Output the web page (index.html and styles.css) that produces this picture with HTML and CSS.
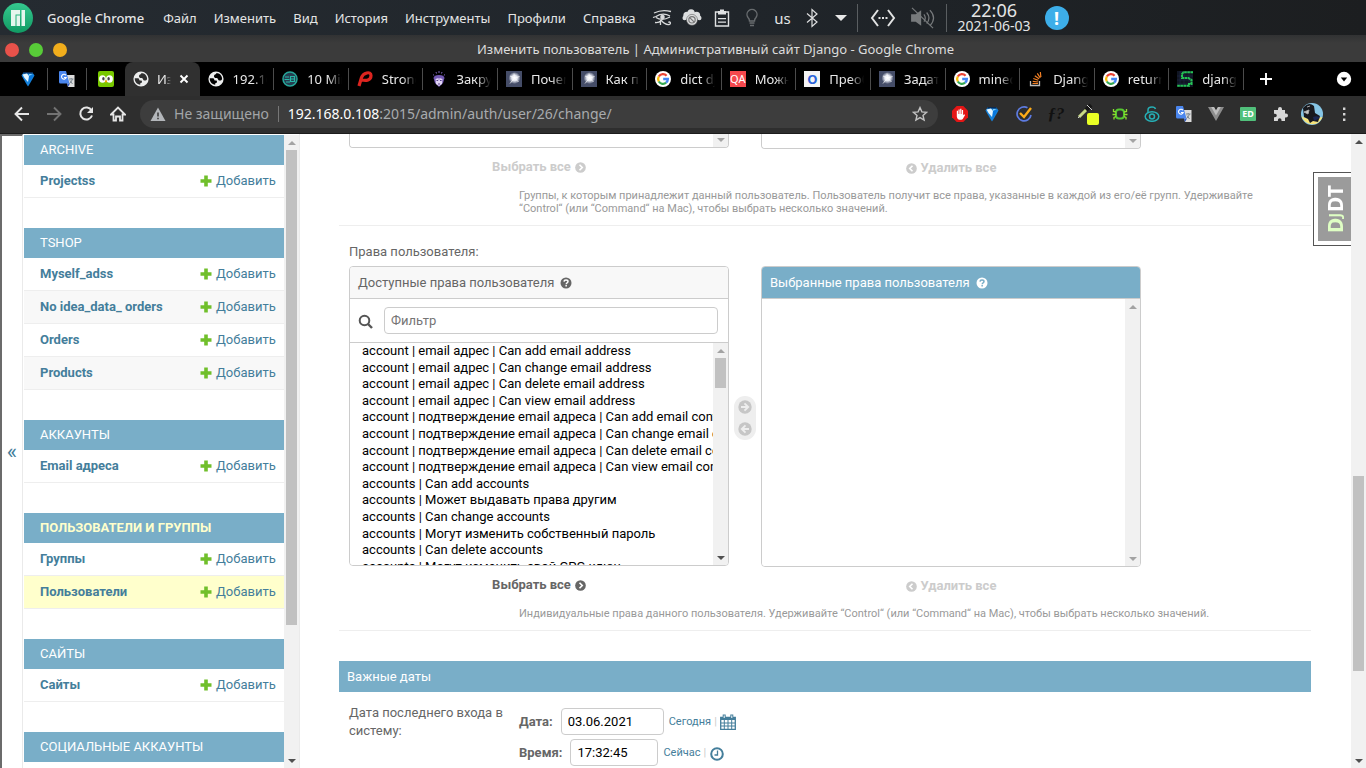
FILE: index.html
```html
<!DOCTYPE html>
<html lang="ru">
<head>
<meta charset="utf-8">
<title>Изменить пользователь | Административный сайт Django</title>
<link rel="stylesheet" href="styles.css">
</head>
<body>
<svg class="defs" aria-hidden="true">
  <defs>
    <linearGradient id="mj" x1="0" y1="0" x2="0" y2="1"><stop offset="0" stop-color="#35c98f"/><stop offset="1" stop-color="#119a63"/></linearGradient>
    <radialGradient id="star-glow"><stop offset="0" stop-color="#fff"/><stop offset=".45" stop-color="#e6e9f2"/><stop offset="1" stop-color="#454d68"/></radialGradient>
  </defs>
  <symbol id="i-gem" viewBox="0 0 16 16"><path d="M4 1h8l2.500 3.500L9 14l-1 1.500L7 14 1.500 4.500z" fill="#1582dc"/><path d="M4 1h8l1 1.500H3z" fill="#0a2a52"/><path d="M2.500 3.500L7 2.500l2 2.500-1 6-3.500-4z" fill="#e4f6ff"/><path d="M9 5l4.500-1-4.500 8z" fill="#0878de"/><path d="M9 3h3.500L9 5z" fill="#7cccf8"/></symbol>
  <symbol id="i-translate" viewBox="0 0 16 16"><path d="M6 4h9.500v12H9z" fill="#dcdcdc"/><path d="M8 12.500h3L9 16z" fill="#2a56c6"/><path d="M.500 0H7l3.500 12.500h-9A1.500 1.500 0 0 1 0 11V1z" fill="#4a86ee"/><path d="M6.900 4.300A2.400 2.400 0 1 0 7.200 6.500H5" fill="none" stroke="#fff" stroke-width="1.100"/><path d="M10 8h4.500M12.200 7v1M13.500 8q-1 3-3 4.500M11 9.500l2.500 3.500" stroke="#7b8790" fill="none"/></symbol>
  <symbol id="i-duo" viewBox="0 0 16 16"><rect width="16" height="16" rx="2" fill="#78c800"/><ellipse cx="4.500" cy="8" rx="3.400" ry="3.700" fill="#fff"/><ellipse cx="11.500" cy="8" rx="3.400" ry="3.700" fill="#fff"/><ellipse cx="5.400" cy="7.800" rx="1.200" ry="1.800" fill="#444"/><ellipse cx="10.600" cy="7.800" rx="1.200" ry="1.800" fill="#444"/><path d="M6.500 9.500h3L8 12z" fill="#f90"/></symbol>
  <symbol id="i-globe" viewBox="2 2 20 20"><path fill="#eceded" d="M12 2.500a9.500 9.500 0 1 0 0 19 9.500 9.500 0 0 0 0-19zM11 19.200c-4-.5-7-3.800-6.800-8.200h3.300c1.500 0 2 .6 2.300 1.800.3 1 1 1.200 2 1.200.9 0 1.400.5 1.400 1.300 0 1-.7 1.400-1.500 1.700-.6.300-.7 1-.7 2.200zM19.600 12c-.4 1.500-1.500 2-2.700 2-1.500 0-2-.8-2.500-2-.4-1-1-1.300-2.300-1.300-1.600 0-2.600-.8-2.600-2.200 0-1.200.8-2 2-2.300.7-.2 1-.7 1-1.700 4 .2 7.300 3.500 7.100 7.500z"/></symbol>
  <symbol id="i-ten" viewBox="0 0 16 16"><circle cx="8" cy="8" r="7" fill="#263d50" stroke="#27a699" stroke-width="1.500"/><path d="M3 6h4M2.500 8.500h5M4 11h4M8.500 5v6M8.500 5.500h4v5h-4M9 8h4" stroke="#27b7a7" fill="none" stroke-width="1.200"/></symbol>
  <symbol id="i-p" viewBox="0 0 16 16"><path d="M2 15l2.500-8.500C6 2 14-.500 14 4.500S9 10 5 9" fill="none" stroke="#dc241f" stroke-width="3.200"/></symbol>
  <symbol id="i-face" viewBox="0 0 16 16"><path d="M2 3.500l1.200 1M5 1l.500 1.500M8 0v2M11 1l-.500 1.500M14 3.500l-1.200 1" stroke="#7b65b5"/><path d="M2.500 7Q3 4 8 4t5.500 3L12 12l-4 4-4-4z" fill="#7359b4"/><path d="M4.500 8l3-1 .500 3 .500-3 3 1-.500 5L8 15l-3-2z" fill="#e1d4f4"/><path d="M5.500 9.500h1.600M9 9.500h1.600M7 13h2" stroke="#543e87"/></symbol>
  <symbol id="i-burst" viewBox="0 0 16 16"><rect width="16" height="16" fill="#454d68"/><circle cx="8.500" cy="7" r="6" fill="url(#star-glow)"/><path d="M8.500 7L8 2.500M8.500 7l5-1.500M8.500 7l4 4M8.500 7L4 12.500M8.500 7L4 5" stroke="#fff" stroke-width=".7"/></symbol>
  <symbol id="i-google" viewBox="0 0 16 16"><circle cx="8" cy="8" r="8" fill="#fff"/><g fill="none" stroke-width="2.300"><path d="M11.600 4.700A4.900 4.900 0 0 0 3.800 5.500" stroke="#ea4335"/><path d="M3.800 5.500a4.900 4.900 0 0 0 0 5" stroke="#fbbc05"/><path d="M3.800 10.500a4.900 4.900 0 0 0 7.300 1.200" stroke="#34a853"/><path d="M8.200 8h4.700a4.900 4.900 0 0 1-1.800 3.700" stroke="#4285f4"/></g></symbol>
  <symbol id="i-stack" viewBox="0 0 16 16"><path d="M2.500 10v4.500h9V10" fill="none" stroke="#bcbbbb" stroke-width="1.300"/><path d="M4.500 12.500h5.500M4.700 10.300l5.400.700M5.300 7.500l5 1.800M6.800 4.700l4.300 3.100M9.300 2.400l3 4.400M12.300 1l.600 5" stroke="#f48024" stroke-width="1.200"/></symbol>
  <symbol id="i-snake" viewBox="0 0 16 16"><path d="M0 0h16v16H0z" fill="#101522"/><path d="M3 1h12M0 5h16M0 9h16M0 13h16M3 0v16M7 0v16M12 0v16" stroke="#20294b" stroke-width=".6"/><path d="M16 1.200H6.500L5 3v4h6.500l3 2v4H12v1.800H0" fill="none" stroke="#24c454" stroke-width="2" stroke-dasharray="2.600 .5"/></symbol>
  <symbol id="i-q" viewBox="0 0 12 12"><circle cx="6" cy="6" r="5.500" fill="currentColor"/><path d="M4 4.600c.100-2.200 4-2 4 0C8 6 6.200 5.700 6.200 7.200" fill="none" stroke="var(--hole)" stroke-width="1.500"/><path d="M5.400 8h1.500v1.500H5.400z" fill="var(--hole)"/></symbol>
  <symbol id="i-next" viewBox="0 0 12 12"><circle cx="6" cy="6" r="5.800" fill="currentColor"/><path d="M4.900 3l3 3-3 3" fill="none" stroke="#fff" stroke-width="1.800"/></symbol>
  <symbol id="i-prev" viewBox="0 0 12 12"><circle cx="6" cy="6" r="5.800" fill="currentColor"/><path d="M7.100 3l-3 3 3 3" fill="none" stroke="#fff" stroke-width="1.800"/></symbol>
  <symbol id="i-plus" viewBox="0 0 12 12"><path d="M4.200.500h3.600v3.700h3.700v3.600H7.800v3.700H4.200V7.800H.500V4.200h3.700z" fill="#70bf2b"/></symbol>
</svg>

<header class="panel">
  <button class="launcher" aria-label="Меню приложений"><svg viewBox="0 0 30 30"><circle cx="15" cy="15" r="15" fill="url(#mj)"/><path d="M8 7h9v4.500h-4.500V23H8zM13.500 12.500H17V23h-3.500zM18.500 7H22v16h-3.500z" fill="#e5f6ed"/></svg></button>
  <nav class="menu">
    <button class="menu-app">Google Chrome</button><button>Файл</button><button>Изменить</button><button>Вид</button><button>История</button><button>Инструменты</button><button>Профили</button><button>Справка</button>
  </nav>
  <div class="tray">
    <button aria-label="Глаз"><svg viewBox="0 0 20 20"><g fill="none" stroke="#d8dadb" stroke-width="1.300"><path d="M2 5q8-4 17-1.500M1 9.500l3-1q7-4.500 14-.5M4 9.500q6 4 14-.5M8.500 12v5M9 12q4 5 8 4.500 2-.5 1.200-2.200-1-.8-1.700.4M9 12.500q-2 2.500-6 2"/></g><circle cx="10.500" cy="9" r="2.300" fill="#d8dadb"/></svg></button>
    <button aria-label="Облако"><svg viewBox="0 0 22 20"><g fill="#dcdedf"><circle cx="10" cy="4.500" r="4"/><circle cx="5.500" cy="7" r="4"/><circle cx="16" cy="7" r="4"/><circle cx="3" cy="10" r="2.500"/><circle cx="19" cy="10" r="2.500"/></g><circle cx="11" cy="12" r="6" fill="#dcdedf" stroke="#555" stroke-width=".6"/><circle cx="11" cy="12" r="3.500" fill="none" stroke="#777" stroke-width="1.300"/><path d="M8.500 9.500l5 5" stroke="#777" stroke-width="1.300"/></svg></button>
    <button aria-label="Буфер обмена"><svg viewBox="0 0 20 20"><path d="M3.500 4h13v14h-13z" fill="none" stroke="#e0e2e3" stroke-width="1.400"/><path d="M6 3h2V1.500h4V3h2v3.500H6zM6 10h8v1.300H6zM6 13.500h8v1.300H6z" fill="#e0e2e3"/></svg></button>
    <button aria-label="Подсветка"><svg viewBox="0 0 20 20"><path d="M7.500 13q0-2-1.500-3.500a5 5 0 1 1 8 0Q12.500 11 12.500 13zM7.500 15h5M8 17.500h4" fill="none" stroke="#686c6f" stroke-width="1.400"/></svg></button>
    <button class="layout">us</button>
    <button aria-label="Bluetooth"><svg viewBox="0 0 20 20"><path d="M5 5.500l10 8.500-5 4.500v-17L15 6 5 14.500" fill="none" stroke="#dedfe0" stroke-width="1.200"/></svg></button>
    <button class="more" aria-label="Развернуть"><svg viewBox="0 0 20 20"><path d="M4 7h12l-6 6z" fill="#e8e8e8"/></svg></button>
    <i class="rule"></i>
    <button aria-label="Сеть"><svg class="wide" viewBox="0 0 26 20"><path d="M8 2L2 10l6 8M18 2l6 8-6 8" fill="none" stroke="#e2e3e3" stroke-width="2"/><path d="M8.500 9h2v2h-2zM12 9h2v2h-2zM15.500 9h2v2h-2z" fill="#e2e3e3"/></svg></button>
    <button class="muted" aria-label="Звук выключен"><svg class="wide" viewBox="0 0 26 24"><path d="M0 8h5l6-4.500v17L5 16H0z" fill="#777a7c"/><path d="M14 8q3 4 0 8M17 6q5 6 0 12M20.500 3.500q8 8.500 0 17M1 1l23 22" fill="none" stroke="#777a7c" stroke-width="1.300"/></svg></button>
    <i class="rule"></i>
    <div class="clock"><time class="hour">22:06</time><time class="date">2021-06-03</time></div>
    <button class="notice" aria-label="Уведомление">!</button>
  </div>
</header>

<div class="titlebar"><div class="lights"><button class="close" aria-label="Закрыть"></button><button class="max" aria-label="Развернуть окно"></button><button class="min" aria-label="Свернуть"></button></div><h1>Изменить пользователь | Административный сайт Django - Google Chrome</h1></div>

<div class="tabbar">
  <button class="pinned" aria-label="Закреплённая вкладка"><svg><use href="#i-gem"/></svg></button>
  <button class="pinned" aria-label="Переводчик"><svg><use href="#i-translate"/></svg></button>
  <button class="pinned last" aria-label="Duolingo"><svg><use href="#i-duo"/></svg></button>
  <div class="tabs">
    <button class="tab active"><svg><use href="#i-globe"/></svg><span>Изм</span><svg class="x" viewBox="0 0 10 10"><path d="M1.500 1.500l7 7M8.500 1.500l-7 7" stroke="#fff" stroke-width="1.900"/></svg></button>
    <button class="tab"><svg><use href="#i-globe"/></svg><span>192.168</span></button>
    <button class="tab"><svg><use href="#i-ten"/></svg><span>10 Minute</span></button>
    <button class="tab"><svg><use href="#i-p"/></svg><span>Strong</span></button>
    <button class="tab"><svg><use href="#i-face"/></svg><span>Закруг</span></button>
    <button class="tab"><svg><use href="#i-burst"/></svg><span>Почему</span></button>
    <button class="tab"><svg><use href="#i-burst"/></svg><span>Как пр</span></button>
    <button class="tab"><svg><use href="#i-google"/></svg><span>dict dja</span></button>
    <button class="tab"><b class="qa">QA</b><span>Можно</span></button>
    <button class="tab"><b class="o">O</b><span>Преоб</span></button>
    <button class="tab"><svg><use href="#i-burst"/></svg><span>Задать</span></button>
    <button class="tab"><svg><use href="#i-google"/></svg><span>minecr</span></button>
    <button class="tab"><svg><use href="#i-stack"/></svg><span>Django</span></button>
    <button class="tab"><svg><use href="#i-google"/></svg><span>return</span></button>
    <button class="tab"><svg><use href="#i-snake"/></svg><span>django</span></button>
  </div>
  <div class="tab-end">
    <button aria-label="Новая вкладка"><svg viewBox="0 0 16 16"><path d="M8 2v12M2 8h12" stroke="#fff" stroke-width="1.900"/></svg></button>
    <button aria-label="Список вкладок"><svg viewBox="0 0 16 16"><circle cx="8" cy="8" r="7.200" fill="#fff"/><path d="M4.800 6.500h6.400L8 10.500z" fill="#000"/></svg></button>
  </div>
</div>

<div class="toolbar">
  <button aria-label="Назад"><svg viewBox="0 0 16 16"><path d="M15 8H2M8 1.500L1.500 8 8 14.500" fill="none" stroke="#e6e6e6" stroke-width="1.900"/></svg></button>
  <button aria-label="Вперёд"><svg viewBox="0 0 16 16"><path d="M1 8h13M8 1.500L14.500 8 8 14.500" fill="none" stroke="#737373" stroke-width="1.900"/></svg></button>
  <button aria-label="Обновить"><svg viewBox="0 0 16 16"><path d="M13.500 4.500A6 6 0 1 0 14 9.500" fill="none" stroke="#e6e6e6" stroke-width="2"/><path d="M15 1v6H9z" fill="#e6e6e6"/></svg></button>
  <button aria-label="Домой"><svg viewBox="0 0 16 16"><path d="M1 8.500L8 1.500l7 7h-2.500v6H10v-4H6v4H3.500v-6z" fill="none" stroke="#e6e6e6" stroke-width="1.800"/></svg></button>
  <div class="omnibox">
    <button class="insecure"><svg viewBox="0 0 16 16"><path d="M8 1.500L15.500 15H.500z" fill="#b3b6ba"/><path d="M7.200 6.500h1.600v4H7.200zM7.200 11.800h1.600v1.500H7.200z" fill="#3c3c3c"/></svg>Не защищено</button>
    <i></i>
    <div class="url" role="textbox" tabindex="0" aria-label="Адресная строка"><b>192.168.0.108</b>:2015/admin/auth/user/26/change/</div>
    <button class="fav" aria-label="В закладки"><svg viewBox="0 0 16 16"><path d="M8 1.600l1.900 4.300 4.700.400-3.600 3.100 1.100 4.600L8 11.600 3.900 14 5 9.400 1.400 6.300l4.700-.4z" fill="none" stroke="#c2c2c2" stroke-width="1.400"/></svg></button>
  </div>
  <div class="ext">
    <button aria-label="AdBlock"><svg viewBox="0 0 16 16"><path d="M4.700 0h6.600L16 4.700v6.600L11.300 16H4.700L0 11.300V4.700z" fill="#e41616"/><path d="M4.800 10.500V4.800h1.200V8h.5V3.500h1.200V8h.5V2.800h1.200V8h.5V4h1.200v5.200l1-.9 1 .6-2.300 4.200q-.6.700-1.500.7H7.500q-2 0-2.700-3.300z" fill="#fff"/></svg></button>
    <button aria-label="Gem"><svg><use href="#i-gem"/></svg></button>
    <button aria-label="Задачи"><svg viewBox="0 0 16 16"><path d="M11.500 1.800A7 7 0 1 0 15 9" fill="none" stroke="#5d7be0" stroke-width="1.700"/><path d="M4 7l4 4 7-9" fill="none" stroke="#fdab18" stroke-width="2.400"/></svg></button>
    <button class="fq" aria-label="WhatFont">ƒ?</button>
    <button aria-label="Пипетка"><svg class="pick" viewBox="0 0 22 22"><path d="M2 14l9-9" stroke="#c9dc83" stroke-width="3"/><path d="M9 7l5-5" stroke="#161616" stroke-width="4"/><path d="M10 2l5 5M1 15l3-3" stroke="#ccc"/><rect x="10" y="10" width="12" height="12" rx="2" fill="#e9ff25"/></svg></button>
    <button aria-label="Жук"><svg viewBox="0 0 16 16"><rect x="4" y="3.500" width="8" height="9" rx="3" fill="none" stroke="#55c732" stroke-width="2"/><path d="M4 6L1.500 5.500V3M12 6l2.500-.5V3M4 8.500H.500M12 8.500h3.500M4 10.500l-2 1v2M12 10.500l2 1v2" fill="none" stroke="#8ee02c" stroke-width="1.300"/></svg></button>
    <button aria-label="Приватность"><svg viewBox="0 0 16 16"><g fill="none" stroke="#26aeb4" stroke-width="1.500"><ellipse cx="8" cy="10.500" rx="6.800" ry="4.800"/><circle cx="8" cy="10.500" r="2.500"/><path d="M4 7V4q0-3 4-3 3 0 3.500 2"/></g></svg></button>
    <button aria-label="Перевод"><svg><use href="#i-translate"/></svg></button>
    <button aria-label="Vue"><svg viewBox="0 0 16 16"><path d="M0 1h6l2 3.500L10 1h6L8 15z" fill="#8c8c8c"/><path d="M3.200 1H6l2 3.500L10 1h2.800L8 9.500z" fill="#bebebe"/></svg></button>
    <button aria-label="ED"><b class="ed">ED</b></button>
    <button aria-label="Расширения"><svg viewBox="0 0 16 16"><path d="M2 4h4V3a2 2 0 0 1 4 0v1h3v3.500h1a2 2 0 0 1 0 4h-1V15H9.500v-1a1.800 1.800 0 0 0-3.600 0v1H2v-3.700h1a1.800 1.800 0 0 0 0-3.600H2z" fill="#d8d8d8"/></svg></button>
    <button aria-label="Профиль"><svg class="ava" viewBox="0 0 22 22"><circle cx="11" cy="11" r="11" fill="#86c5e5"/><path d="M.5 13q6 5 21 1A11 11 0 0 1 .5 13z" fill="#f8e47b"/><path d="M2 5Q8-2 13 3l1 7 5 3-2 6-5-1-3 2-2-4-4-2z" fill="#18191e"/><path d="M3 9l5-2-1 4zM6 4l3-1" fill="#ccc" stroke="#aaa"/><path d="M12 14q5-2 7 1l-6 3z" fill="#1b2853"/></svg></button>
    <button aria-label="Ещё"><svg viewBox="0 0 16 16"><path d="M7 1.500h2.400V4H7zM7 7h2.400v2.400H7zM7 12.500h2.400V15H7z" fill="#d5d5d5"/></svg></button>
  </div>
</div>

<div class="page">
  <button class="toggle" aria-label="Свернуть панель">«</button>
  <div class="sidebar">
    <nav class="apps">
      <table><caption>ARCHIVE</caption><tr><th><a href="#">Projectss</a></th><td><a href="#"><svg><use href="#i-plus"/></svg>Добавить</a></td></tr></table>
      <table><caption>TSHOP</caption>
        <tr><th><a href="#">Myself_adss</a></th><td><a href="#"><svg><use href="#i-plus"/></svg>Добавить</a></td></tr>
        <tr><th><a href="#">No idea_data_ orders</a></th><td><a href="#"><svg><use href="#i-plus"/></svg>Добавить</a></td></tr>
        <tr><th><a href="#">Orders</a></th><td><a href="#"><svg><use href="#i-plus"/></svg>Добавить</a></td></tr>
        <tr><th><a href="#">Products</a></th><td><a href="#"><svg><use href="#i-plus"/></svg>Добавить</a></td></tr></table>
      <table><caption>АККАУНТЫ</caption><tr><th><a href="#">Email адреса</a></th><td><a href="#"><svg><use href="#i-plus"/></svg>Добавить</a></td></tr></table>
      <table class="current"><caption>ПОЛЬЗОВАТЕЛИ И ГРУППЫ</caption>
        <tr><th><a href="#">Группы</a></th><td><a href="#"><svg><use href="#i-plus"/></svg>Добавить</a></td></tr>
        <tr class="here"><th><a href="#">Пользователи</a></th><td><a href="#"><svg><use href="#i-plus"/></svg>Добавить</a></td></tr></table>
      <table><caption>САЙТЫ</caption><tr><th><a href="#">Сайты</a></th><td><a href="#"><svg><use href="#i-plus"/></svg>Добавить</a></td></tr></table>
      <table><caption>СОЦИАЛЬНЫЕ АККАУНТЫ</caption></table>
    </nav>
    <div class="bar side-bar"><i class="up dim"></i><b></b><s></s><i class="down"></i></div>
  </div>

  <main>
    <section class="row">
      <div class="selector cut">
        <div><div class="list-wrap"><select multiple aria-label="Доступные группы"></select><div class="bar"><i class="down dim"></i></div></div><a class="all off" href="#">Выбрать все <svg><use href="#i-next"/></svg></a></div>
        <div></div>
        <div><div class="list-wrap"><select multiple aria-label="Выбранные группы"></select><div class="bar"><i class="down dim"></i></div></div><a class="all off" href="#"><svg><use href="#i-prev"/></svg> Удалить все</a></div>
      </div>
      <p class="help">Группы, к которым принадлежит данный пользователь. Пользователь получит все права, указанные в каждой из его/её групп. Удерживайте “Control“ (или “Command“ на Mac), чтобы выбрать несколько значений.</p>
    </section>

    <section class="row">
      <label class="row-label" for="perms">Права пользователя:</label>
      <div class="selector">
        <div>
          <div class="box">
            <h2>Доступные права пользователя <svg><use href="#i-q"/></svg></h2>
            <div class="filter"><label for="filter" aria-label="Фильтр"><svg viewBox="0 0 16 16"><circle cx="6.500" cy="7.500" r="4.800" fill="none" stroke="#555" stroke-width="2"/><path d="M10 11l4 4" stroke="#555" stroke-width="2.400"/></svg></label><input id="filter" type="text" placeholder="Фильтр"></div>
            <div class="list-wrap available"><select id="perms" multiple>
              <option>account | email адрес | Can add email address</option>
              <option>account | email адрес | Can change email address</option>
              <option>account | email адрес | Can delete email address</option>
              <option>account | email адрес | Can view email address</option>
              <option>account | подтверждение email адреса | Can add email confirmation</option>
              <option>account | подтверждение email адреса | Can change email confirmation</option>
              <option>account | подтверждение email адреса | Can delete email confirmation</option>
              <option>account | подтверждение email адреса | Can view email confirmation</option>
              <option>accounts | Can add accounts</option>
              <option>accounts | Может выдавать права другим</option>
              <option>accounts | Can change accounts</option>
              <option>accounts | Могут изменить собственный пароль</option>
              <option>accounts | Can delete accounts</option>
              <option>accounts | Могут изменить свой GPG ключ</option>
            </select><div class="bar list-bar"><i class="up dim"></i><b></b><s></s><i class="down"></i></div></div>
          </div>
          <a class="all" href="#">Выбрать все <svg><use href="#i-next"/></svg></a>
        </div>
        <div class="mover"><button aria-label="Добавить выбранные"><svg viewBox="0 0 14 14"><circle cx="7" cy="7" r="6.700" fill="#c6c6c6"/><path d="M3 7h7M6.500 3.300L10.200 7l-3.700 3.700" fill="none" stroke="#eee" stroke-width="1.900"/></svg></button><button aria-label="Удалить выбранные"><svg viewBox="0 0 14 14"><circle cx="7" cy="7" r="6.700" fill="#c6c6c6"/><path d="M11 7H4M7.500 3.300L3.800 7l3.700 3.700" fill="none" stroke="#eee" stroke-width="1.900"/></svg></button></div>
        <div>
          <div class="box chosen">
            <h2>Выбранные права пользователя <svg><use href="#i-q"/></svg></h2>
            <div class="list-wrap"><select multiple aria-label="Выбранные права пользователя"></select><div class="bar"><i class="up dim"></i><s></s><i class="down dim"></i></div></div>
          </div>
          <a class="all off" href="#"><svg><use href="#i-prev"/></svg> Удалить все</a>
        </div>
      </div>
      <p class="help">Индивидуальные права данного пользователя. Удерживайте “Control“ (или “Command“ на Mac), чтобы выбрать несколько значений.</p>
    </section>

    <h2 class="section-title">Важные даты</h2>
    <section class="dates">
      <div class="dates-label">Дата последнего входа в систему:</div>
      <div class="dates-fields">
        <div class="field"><label for="d">Дата:</label><input id="d" class="date-input" type="text" value="03.06.2021"><a href="#">Сегодня</a><em>|</em><button aria-label="Календарь"><svg viewBox="0 0 16 16"><path d="M.7 3.500h14.600v11.800H.7z" fill="#fff" stroke="#447e9b" stroke-width="1.300"/><path d="M1 3.500h14V6H1z" fill="#447e9b"/><path d="M4.300 6v9M8 6v9M11.700 6v9M1 9h14M1 12h14" stroke="#447e9b"/><path d="M4.200.5v4M11.800.5v4" stroke="#447e9b" stroke-width="3"/><path d="M4.200 1.500v2.500M11.800 1.500v2.500" stroke="#fff"/></svg></button></div>
        <div class="field"><label for="t">Время:</label><input id="t" class="time-input" type="text" value="17:32:45"><a href="#">Сейчас</a><em>|</em><button aria-label="Часы"><svg viewBox="0 0 16 16"><circle cx="8" cy="9" r="5.800" fill="none" stroke="#447e9b" stroke-width="2"/><path d="M8.500 5.500V10H5.500" fill="none" stroke="#447e9b" stroke-width="1.300"/></svg></button></div>
      </div>
    </section>
    <a class="djdt" href="#"><span><i>D<small>J</small></i>DT</span></a>
  </main>
  <div class="bar page-bar"><i class="up"></i><u></u><b></b><s></s><i class="down"></i></div>
</div>
</body>
</html>
```

FILE: styles.css
```css
* { box-sizing: border-box; }
body { margin: 0; height: 100vh; overflow: hidden; display: flex; flex-direction: column; font: 13px/18px "Noto Sans", sans-serif; background: #000; color: #e4e5e5; }
button { margin: 0; padding: 0; border: 0; background: none; color: inherit; font: inherit; }
a { text-decoration: none; color: #447e9b; }
svg { display: block; flex: none; width: 16px; height: 16px; }
.defs { position: absolute; width: 0; height: 0; }

/* desktop panel */
.panel { flex: none; display: flex; align-items: center; height: 35px; padding-left: 3px; background: linear-gradient(90deg, #252b31, #20252a 55%, #1c1e20); }
.launcher svg { width: 30px; height: 30px; }
.menu { display: flex; gap: 17px; margin-left: 14px; }
.menu button { white-space: nowrap; }
.menu .menu-app { font-weight: 500; margin-right: 2px; }
.tray { display: flex; align-items: center; margin-left: 12px; }
.tray button { display: flex; flex: none; align-items: center; justify-content: center; width: 30px; }
.tray svg { width: 20px; height: 20px; }
.tray svg.wide { width: 26px; height: 22px; }
.tray .layout { font-size: 15px; }
.tray .more { width: 28px; margin-right: 2px; }
.tray .rule { flex: none; width: 1px; height: 28px; margin: 0 10px 0 0; background: #5a5e61; }
.tray .muted { width: 34px; margin: 0 6px 0 8px; }
.clock { display: flex; flex-direction: column; align-items: center; line-height: 15px; }
.clock .hour { font-size: 18px; }
.clock .date { font-size: 14px; }
.tray .notice { width: 24px; height: 24px; margin-left: 14px; border-radius: 50%; background: #3daee9; color: #fff; font-size: 18px; font-weight: 700; }

.titlebar { flex: none; display: flex; align-items: center; height: 27px; padding: 0 2px 0 5px; background: linear-gradient(#313233, #3b3b3b 8px); }
.lights { display: flex; gap: 10px; padding-top: 2px; }
.lights button { width: 14px; height: 14px; border-radius: 50%; }
.close { background: #e9524a; }
.max { background: #58cc38; }
.min { background: #f2ae1c; }
.titlebar h1 { flex: 1; margin: 0; text-align: center; font-size: 13px; font-weight: 400; color: #dcdcdc; }

/* tab strip */
.tabbar { flex: none; display: flex; align-items: stretch; height: 34px; padding-left: 9px; background: #000; }
.pinned { display: flex; align-items: center; justify-content: center; width: 39px; border-right: 1px solid transparent; border-image: linear-gradient(transparent 20%, #4b4b4b 20%, #4b4b4b 80%, transparent 80%) 1; }
.pinned.last { width: 38px; border-image: none; }
.tabs { flex: 1; display: flex; min-width: 0; }
.tab { flex: 1 1 0; display: flex; align-items: center; gap: 9px; min-width: 0; padding: 0 6px 0 8px; border-right: 1px solid transparent; border-image: linear-gradient(transparent 20%, #4b4b4b 20%, #4b4b4b 80%, transparent 80%) 1; color: #e8e8e8; }
.tab.active { gap: 8px; border-image: none; border-radius: 8px 8px 0 0; background: #303030; }
.tab span { flex: 1; overflow: hidden; text-align: left; white-space: nowrap; -webkit-mask-image: linear-gradient(90deg, #000 60%, transparent); mask-image: linear-gradient(90deg, #000 60%, transparent); }
.tab .x { width: 10px; height: 10px; margin-right: 4px; }
.tab b { flex: none; width: 16px; height: 16px; line-height: 16px; text-align: center; }
.tab .qa { background: #f5484d; color: #fff; font-size: 11px; font-weight: 400; }
.tab .o { background: #f4f4f4; color: #2b62d9; font-size: 13px; }
.tab-end { flex: none; display: flex; align-items: center; justify-content: space-between; width: 122px; padding: 0 14px; }

/* address bar */
.toolbar { flex: none; display: flex; align-items: center; height: 38px; padding: 0 6px 1px; background: #2e2e2e; border-bottom: 1px solid #1c1c1c; }
.toolbar > button, .ext button { display: flex; flex: none; align-items: center; justify-content: center; width: 32px; height: 28px; }
.omnibox { flex: 1; display: flex; align-items: center; min-width: 0; height: 28px; margin: 0 6px; padding: 0 10px; border-radius: 14px; background: #3d3d3d; font-size: 14px; }
.insecure { display: flex; align-items: center; gap: 8px; color: #a2a5a8; }
.omnibox i { width: 1px; height: 16px; margin: 0 9px; background: #777; }
.url { flex: 1; color: #a8abae; }
.url b { font-weight: 400; color: #fff; }
.ext { display: flex; }
.ext .fq { color: #111; font: italic 700 17px "Liberation Serif", serif; }
.pick { width: 22px; height: 22px; }
.ava { width: 22px; height: 22px; }
.ed { width: 16px; height: 14px; border-radius: 1px; background: #51c07b; color: #fff; font-size: 9px; line-height: 14px; }

/* admin page */
.page { flex: 1; display: flex; min-height: 0; background: #fff; color: #666; font-family: Roboto, sans-serif; }
.toggle { flex: none; width: 23px; border: solid #6b6b6b; border-width: 2px 0 0 2px; border-right: 1px solid #eaeaea; background: #fff; color: #447e9b; font-size: 22px; }
.sidebar { flex: none; display: flex; width: 277px; padding: 1px 0 0 1px; border-right: 1px solid #eaeaea; }
.apps { flex: 1; overflow: hidden; }
.apps table { width: 100%; margin-bottom: 30px; border-spacing: 0; }
.apps caption { height: 30px; padding: 0 16px; background: #79aec8; color: #fff; font-size: 13px; line-height: 30px; text-align: left; }
.apps .current caption { color: #ffc; font-weight: 700; }
.apps th, .apps td { height: 33px; padding: 0; border-bottom: 1px solid #eee; text-align: left; }
.apps th { padding-left: 16px; }
.apps td { width: 84px; padding-right: 8px; }
.apps td a { display: flex; align-items: center; gap: 4px; }
.apps td svg { width: 12px; height: 12px; }
.apps tr:nth-child(even) { background: #f8f8f8; }
.apps tr.here { background: #ffc; }

/* scroll bars */
.bar { flex: none; display: flex; flex-direction: column; align-items: center; width: 15px; background: #f1f1f1; }
.bar i { flex: none; display: flex; align-items: center; justify-content: center; width: 15px; height: 15px; }
.bar i::after { content: ""; border: 4px solid transparent; }
.bar .up::after { border-top-width: 0; border-bottom-color: #505050; }
.bar .down::after { border-bottom-width: 0; border-top-color: #505050; }
.bar .up.dim::after { border-bottom-color: #a3a3a3; }
.bar .down.dim::after { border-top-color: #a3a3a3; }
.bar b { width: 11px; background: #c1c1c1; }
.bar s { flex: 1; }
.side-bar b { flex: 0 0 75%; }
.list-bar b { flex: 0 0 30px; }
.page-bar u { flex: 0 0 327px; }
.page-bar b { flex: 0 0 195px; }

/* change form */
main { position: relative; flex: 1; min-width: 0; overflow: hidden; padding: 0 40px 0 39px; }
.row { padding: 0 10px 10px; border-bottom: 1px solid #eee; }
.row-label { display: block; padding: 17px 0 5px; }
.selector { display: grid; grid-template-columns: 380px 32px 380px; align-items: start; }
.box { overflow: hidden; border: 1px solid #ccc; border-radius: 4px; }
.box h2 { display: flex; align-items: center; gap: 6px; height: 32px; margin: 0; padding: 0 8px; border-bottom: 1px solid #ccc; background: #f8f8f8; color: #666; font-size: 13px; font-weight: 400; --hole: #fff; }
.box h2 svg { width: 12px; height: 12px; }
.box.chosen h2 { background: #79aec8; color: #fff; --hole: #79aec8; }
.filter { display: flex; align-items: center; gap: 10px; padding: 8px 10px 8px 8px; border-bottom: 1px solid #ccc; }
input { height: 27px; padding: 0 6px; border: 1px solid #ccc; border-radius: 4px; background: #fff; color: #000; font: 13px Roboto, sans-serif; }
.filter input { flex: 1; min-width: 0; }
.list-wrap { display: flex; height: 267px; }
.list-wrap.available { height: 222px; }
.list-wrap select { flex: 1; min-width: 0; height: 100%; padding: 0 10px; border: 0; outline: 0; overflow: hidden; scrollbar-width: none; background: #fff; color: #000; font: 13px Roboto, sans-serif; }
option { box-sizing: content-box; }
.cut .list-wrap { height: 14px; border: 1px solid #ccc; border-top: 0; border-radius: 0 0 4px 4px; overflow: hidden; }
.cut .bar { justify-content: flex-end; }
.cut > :last-child .list-wrap { height: 15px; }
.all { display: flex; align-items: center; justify-content: center; gap: 4px; margin-top: 10px; color: #666; font-weight: 700; }
.all svg { width: 11px; height: 11px; }
.all.off { color: #ccc; }
.mover { display: flex; flex-direction: column; align-items: center; justify-self: center; gap: 8px; width: 22px; margin-top: 130px; padding: 4px 0; border-radius: 11px; background: #eee; }
.mover svg { width: 14px; height: 14px; }
.help { margin: 12px 0 0; padding: 0 20px 0 170px; color: #999; font-size: 11px; line-height: 13px; }
.section-title { margin: 30px 0 0; padding: 0 8px; background: #79aec8; color: #fff; font-size: 13px; font-weight: 400; line-height: 31px; }
.dates { display: flex; padding: 12px 10px; }
.dates-label { width: 170px; padding-right: 10px; }
.dates-fields { display: flex; flex-direction: column; gap: 4px; padding-top: 4px; }
.field { display: flex; align-items: center; }
.field label { margin-right: 8px; font-weight: 700; }
.field a { margin-left: 5px; font-size: 11px; }
.field em { margin: 0 3px; color: #ccc; font-size: 11px; font-style: normal; }
.date-input { width: 103px; }
.time-input { width: 88px; }

/* debug toolbar handle, floats over the form */
.djdt { position: absolute; top: 38px; right: 0; display: flex; height: 74px; width: 38px; padding: 4px 0 4px 4px; border: 1px solid #555; border-right: 0; background: #fff; }
.djdt span { flex: 1; display: flex; align-items: center; justify-content: center; writing-mode: vertical-rl; transform: rotate(180deg); background: #9b9b9b; color: #fff; font: 700 21px/32px "Noto Sans", sans-serif; }
.djdt i { color: #dfffc4; font-style: normal; }
.djdt small { font-size: 16px; font-weight: 600; }
```
